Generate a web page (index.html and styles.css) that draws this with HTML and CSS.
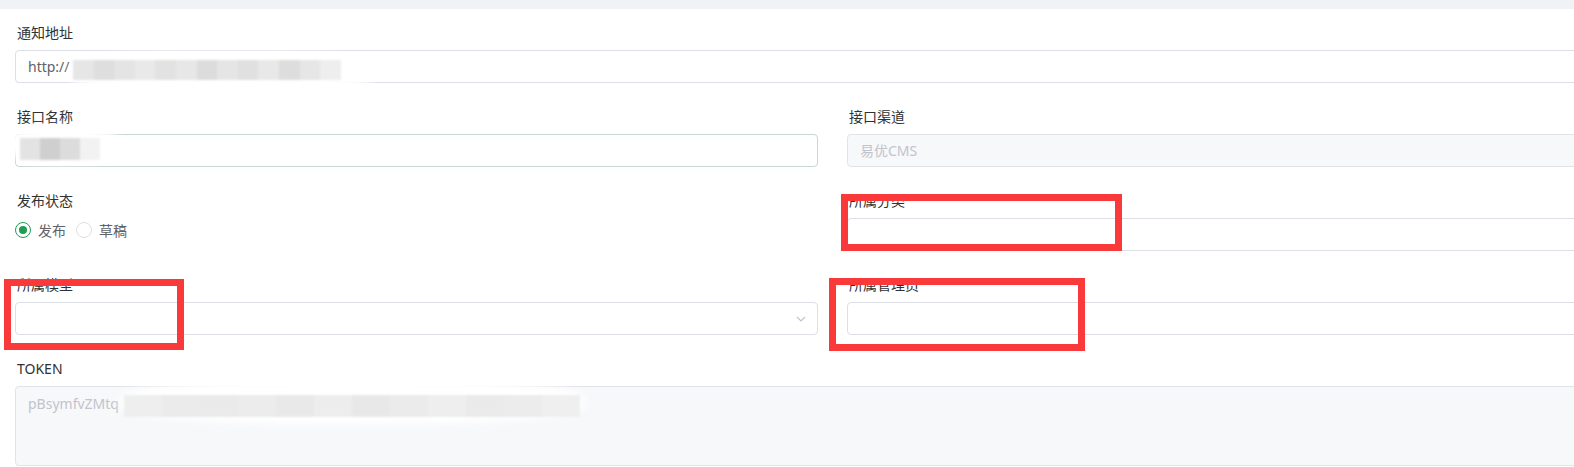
FILE: index.html
```html
<!DOCTYPE html>
<html lang="zh-CN">
<head>
    <meta charset="UTF-8">
    <meta name="viewport" content="width=device-width, initial-scale=1.0">
    <title>接口设置</title>
    <link rel="stylesheet" href="styles.css">
</head>
<body>
    <div class="page">
        <div class="topbar"></div>
        <form class="api-form">
            <div class="form-item full">
                <div class="form-label">通知地址</div>
                <div class="form-input">http://</div>
            </div>

            <div class="form-item">
                <div class="form-label">接口名称</div>
                <div class="form-input hover"></div>
            </div>
            <div class="form-item">
                <div class="form-label">接口渠道</div>
                <div class="form-input disabled">易优CMS</div>
            </div>

            <div class="form-item">
                <div class="form-label">发布状态</div>
                <div class="radio-group">
                    <span class="radio checked"><span class="radio-dot"></span>发布</span>
                    <span class="radio"><span class="radio-dot"></span>草稿</span>
                </div>
            </div>
            <div class="form-item">
                <div class="form-label">所属分类</div>
                <div class="form-input"></div>
            </div>

            <div class="form-item">
                <div class="form-label">所属模型</div>
                <div class="form-input select">
                    <svg class="chevron" width="10" height="6" viewBox="0 0 10 6"><path d="M1 1l4 4 4-4" fill="none" stroke="#c0c4cc" stroke-width="1.2"/></svg>
                </div>
            </div>
            <div class="form-item">
                <div class="form-label">所属管理员</div>
                <div class="form-input"></div>
            </div>

            <div class="form-item full">
                <div class="form-label">TOKEN</div>
                <div class="form-textarea disabled">pBsymfvZMtq</div>
            </div>
        </form>

        <!-- redacted values -->
        <div class="redact redact-url">
            <span class="blob"></span>
            <span class="strip">
                <i style="background:#e6e6e6"></i><i style="background:#dedede"></i><i style="background:#e4e4e4"></i><i style="background:#e9e9e9"></i><i style="background:#e2e2e2"></i><i style="background:#e7e7e7"></i><i style="background:#dcdcdc"></i><i style="background:#e5e5e5"></i><i style="background:#e0e0e0"></i><i style="background:#e8e8e8"></i><i style="background:#dddddd"></i><i style="background:#e6e6e6"></i><i style="background:#eeeeee"></i>
            </span>
        </div>
        <div class="redact redact-name">
            <span class="blob"></span>
            <span class="strip">
                <i style="background:#e3e3e3"></i><i style="background:#cfcfcf"></i><i style="background:#dcdcdc"></i><i style="background:#f2f2f2"></i>
            </span>
        </div>
        <div class="redact redact-token">
            <span class="blob"></span>
            <span class="strip">
                <i style="background:#eeeeee"></i><i style="background:#ebebeb"></i><i style="background:#eaeaea"></i><i style="background:#ececec"></i><i style="background:#e9e9e9"></i><i style="background:#ededed"></i><i style="background:#e8e8e8"></i><i style="background:#ebebeb"></i><i style="background:#eeeeee"></i><i style="background:#eaeaea"></i><i style="background:#ececec"></i><i style="background:#efefef"></i>
            </span>
        </div>

        <!-- annotation boxes -->
        <div class="mark mark-category"></div>
        <div class="mark mark-model"></div>
        <div class="mark mark-admin"></div>
    </div>
</body>
</html>
```

FILE: styles.css
```css
html, body {
    margin: 0;
    padding: 0;
}

body {
    background: #fff;
    overflow: hidden;
    font-family: "Noto Sans", "Noto Sans CJK SC", sans-serif;
    font-size: 14px;
    color: #303133;
}

.page {
    position: relative;
    width: 100%;
    height: 467px;
    overflow: hidden;
}

.topbar {
    height: 9px;
    background: #f0f2f5;
}

.api-form {
    display: grid;
    grid-template-columns: 803px 803px;
    column-gap: 29px;
    padding: 7px 0 0 15px;
    margin: 0;
}

.form-item {
    margin-bottom: 17px;
}

.form-item.full {
    grid-column: 1 / -1;
}

.form-label {
    height: 34px;
    line-height: 34px;
    padding-left: 2px;
    color: #303133;
}

.form-input {
    position: relative;
    box-sizing: border-box;
    height: 33px;
    line-height: 31px;
    padding: 0 12px;
    border: 1px solid #dcdfe6;
    border-radius: 4px;
    color: #606266;
    background: #fff;
}

.form-input.hover {
    border-color: #c3d9d1;
}

.form-input.disabled,
.form-textarea.disabled {
    background: #f7f8fa;
    color: #c0c4cc;
    border-color: #e1e3e8;
}

.form-input.select .chevron {
    position: absolute;
    right: 11px;
    top: 13px;
}

.form-textarea {
    box-sizing: border-box;
    height: 80px;
    padding: 6px 12px;
    line-height: 21px;
    border: 1px solid #dcdfe6;
    border-radius: 4px;
}

.radio-group {
    display: flex;
    align-items: center;
    height: 24px;
    color: #606266;
}

.radio {
    display: flex;
    align-items: center;
    margin-right: 10px;
}

.radio-dot {
    box-sizing: border-box;
    width: 16px;
    height: 16px;
    margin-right: 7px;
    border: 1px solid #dcdfe6;
    border-radius: 50%;
    background: #fff;
    position: relative;
}

.radio.checked .radio-dot {
    border-color: #1f9d55;
}

.radio.checked .radio-dot::after {
    content: "";
    position: absolute;
    left: 3px;
    top: 3px;
    width: 8px;
    height: 8px;
    border-radius: 50%;
    background: #1f9d55;
}

/* redacted areas */
.redact {
    position: absolute;
}

.redact .blob {
    position: absolute;
    inset: 0;
    background: #fff;
    border-radius: 40%;
    filter: blur(4px);
}

.redact .strip {
    position: absolute;
    display: flex;
    filter: blur(1px);
}

.redact .strip i {
    flex: 1;
}

.redact-url {
    left: 70px;
    top: 52px;
    width: 305px;
    height: 42px;
}

.redact-url .strip {
    left: 3px;
    top: 8px;
    width: 268px;
    height: 20px;
}

.redact-name {
    left: 6px;
    top: 127px;
    width: 114px;
    height: 36px;
}

.redact-name .strip {
    left: 14px;
    top: 11px;
    width: 80px;
    height: 22px;
}

.redact-token {
    left: 120px;
    top: 380px;
    width: 465px;
    height: 44px;
}

.redact-token .strip {
    left: 4px;
    top: 15px;
    width: 456px;
    height: 22px;
}

/* red annotation boxes */
.mark {
    position: absolute;
    box-sizing: border-box;
    border: 7px solid #fa3a3a;
}

.mark-category {
    left: 841px;
    top: 194px;
    width: 281px;
    height: 57px;
}

.mark-model {
    left: 4px;
    top: 279px;
    width: 180px;
    height: 71px;
}

.mark-admin {
    left: 829px;
    top: 278px;
    width: 256px;
    height: 73px;
}
```
